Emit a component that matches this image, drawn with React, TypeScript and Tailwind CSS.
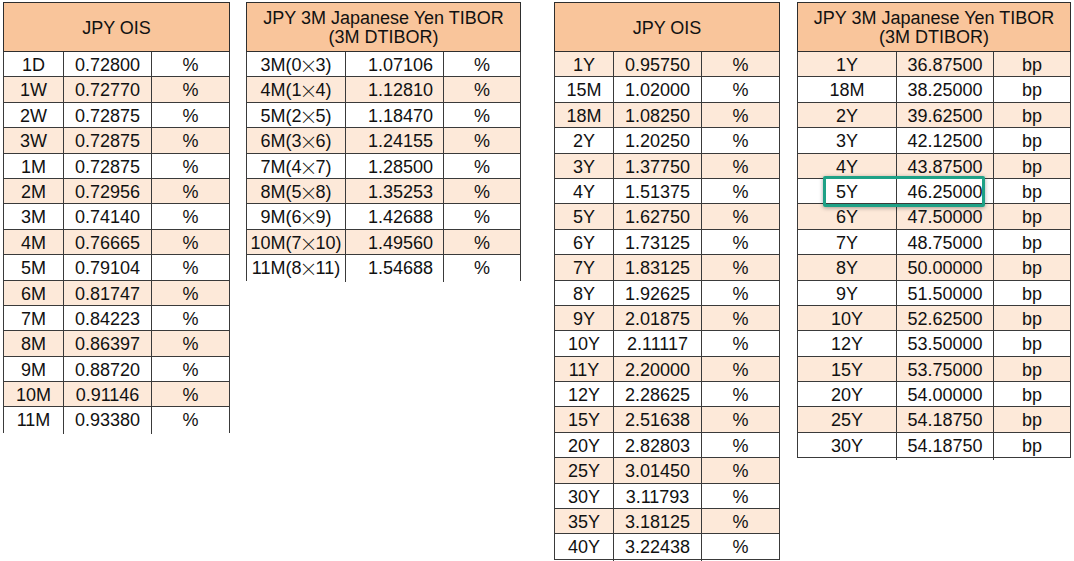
import React from 'react';

type Row = [string, string, string];

const ois1: Row[] = [
  ['1D', '0.72800', '%'],
  ['1W', '0.72770', '%'],
  ['2W', '0.72875', '%'],
  ['3W', '0.72875', '%'],
  ['1M', '0.72875', '%'],
  ['2M', '0.72956', '%'],
  ['3M', '0.74140', '%'],
  ['4M', '0.76665', '%'],
  ['5M', '0.79104', '%'],
  ['6M', '0.81747', '%'],
  ['7M', '0.84223', '%'],
  ['8M', '0.86397', '%'],
  ['9M', '0.88720', '%'],
  ['10M', '0.91146', '%'],
  ['11M', '0.93380', '%'],
];

const tibor1: Row[] = [
  ['3M(0×3)', '1.07106', '%'],
  ['4M(1×4)', '1.12810', '%'],
  ['5M(2×5)', '1.18470', '%'],
  ['6M(3×6)', '1.24155', '%'],
  ['7M(4×7)', '1.28500', '%'],
  ['8M(5×8)', '1.35253', '%'],
  ['9M(6×9)', '1.42688', '%'],
  ['10M(7×10)', '1.49560', '%'],
  ['11M(8×11)', '1.54688', '%'],
];

const ois2: Row[] = [
  ['1Y', '0.95750', '%'],
  ['15M', '1.02000', '%'],
  ['18M', '1.08250', '%'],
  ['2Y', '1.20250', '%'],
  ['3Y', '1.37750', '%'],
  ['4Y', '1.51375', '%'],
  ['5Y', '1.62750', '%'],
  ['6Y', '1.73125', '%'],
  ['7Y', '1.83125', '%'],
  ['8Y', '1.92625', '%'],
  ['9Y', '2.01875', '%'],
  ['10Y', '2.11117', '%'],
  ['11Y', '2.20000', '%'],
  ['12Y', '2.28625', '%'],
  ['15Y', '2.51638', '%'],
  ['20Y', '2.82803', '%'],
  ['25Y', '3.01450', '%'],
  ['30Y', '3.11793', '%'],
  ['35Y', '3.18125', '%'],
  ['40Y', '3.22438', '%'],
];

const tibor2: Row[] = [
  ['1Y', '36.87500', 'bp'],
  ['18M', '38.25000', 'bp'],
  ['2Y', '39.62500', 'bp'],
  ['3Y', '42.12500', 'bp'],
  ['4Y', '43.87500', 'bp'],
  ['5Y', '46.25000', 'bp'],
  ['6Y', '47.50000', 'bp'],
  ['7Y', '48.75000', 'bp'],
  ['8Y', '50.00000', 'bp'],
  ['9Y', '51.50000', 'bp'],
  ['10Y', '52.62500', 'bp'],
  ['12Y', '53.50000', 'bp'],
  ['15Y', '53.75000', 'bp'],
  ['20Y', '54.00000', 'bp'],
  ['25Y', '54.18750', 'bp'],
  ['30Y', '54.18750', 'bp'],
];

// tenor labels like "3M(0×3)": the × is set in the CJK font, as in the source sheet
function Tenor({ text }: { text: string }) {
  const parts = text.split('×');
  if (parts.length === 1) return <>{text}</>;
  return (
    <>
      {parts[0]}
      <span className="mx-[-2px] font-['Noto_Sans_CJK_JP',sans-serif] font-light">×</span>
      {parts[1]}
    </>
  );
}

function RateTable({
  title,
  rows,
  widthClass,
  colsClass,
  oddShaded,
  valueRight,
  lastBorder,
  children,
}: {
  title: React.ReactNode;
  rows: Row[];
  widthClass: string;
  colsClass: string;
  oddShaded: boolean;
  valueRight?: boolean;
  lastBorder?: boolean;
  children?: React.ReactNode;
}) {
  return (
    <div className={`relative flex flex-col shrink-0 ${widthClass}`}>
      <div className="h-[50px] pt-[2px] flex items-center justify-center text-center leading-[19px] bg-[#f9c59b] border border-[#2e2e2e]">
        {title}
      </div>
      {rows.map((r, i) => {
        const shaded = oddShaded ? i % 2 === 1 : i % 2 === 0;
        const last = i === rows.length - 1;
        return (
          <div
            key={i}
            className={`grid ${colsClass} h-[25.4px] border-x border-[#3a3a3a] ${
              last && !lastBorder ? '' : 'border-b'
            } ${shaded ? 'bg-[#fde9d9]' : 'bg-white'}`}
          >
            <div className="flex items-center justify-center border-r border-[#3a3a3a] whitespace-nowrap">
              <Tenor text={r[0]} />
            </div>
            <div
              className={`flex items-center border-r border-[#3a3a3a] ${
                valueRight ? 'justify-end pr-[10px]' : 'justify-center'
              }`}
            >
              {r[1]}
            </div>
            <div className="flex items-center justify-center">{r[2]}</div>
          </div>
        );
      })}
      {children}
    </div>
  );
}

export default function App() {
  return (
    <div className="w-[1074px] h-[561px] overflow-hidden bg-white text-[#111] text-[18px] font-['Liberation_Sans',Arial,sans-serif]">
      <div className="flex items-start pt-[2px] pl-[3px]">
        <RateTable
          title="JPY OIS"
          rows={ois1}
          widthClass="w-[227px]"
          colsClass="grid-cols-[60px_88px_1fr]"
          oddShaded={true}
        />
        <div className="ml-[16px]">
          <RateTable
            title={
              <span>
                JPY 3M Japanese Yen TIBOR
                <br />
                (3M DTIBOR)
              </span>
            }
            rows={tibor1}
            widthClass="w-[275px]"
            colsClass="grid-cols-[99px_98px_1fr]"
            oddShaded={true}
            valueRight
          />
        </div>
        <div className="ml-[33px]">
          <RateTable
            title="JPY OIS"
            rows={ois2}
            widthClass="w-[226px]"
            colsClass="grid-cols-[59px_88px_1fr]"
            oddShaded={false}
            lastBorder
          />
        </div>
        <div className="ml-[17px]">
          <RateTable
            title={
              <span>
                JPY 3M Japanese Yen TIBOR
                <br />
                (3M DTIBOR)
              </span>
            }
            rows={tibor2}
            widthClass="w-[274px]"
            colsClass="grid-cols-[99px_97px_1fr]"
            oddShaded={false}
            lastBorder
          >
            <div className="absolute left-[26px] top-[174px] w-[162px] h-[31px] border-[3px] border-[#1ea186] rounded-[2px] shadow-[0_1px_4px_rgba(0,0,0,0.35)]" />
          </RateTable>
        </div>
      </div>
    </div>
  );
}
